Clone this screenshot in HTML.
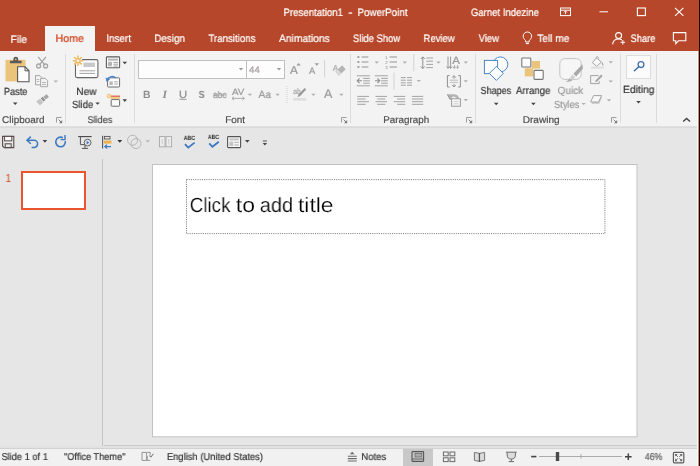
<!DOCTYPE html>
<html><head><meta charset="utf-8"><title>Presentation1 - PowerPoint</title>
<style>
html,body{margin:0;padding:0;}
body{text-rendering:geometricPrecision;width:700px;height:466px;overflow:hidden;background:#e6e6e6;position:relative;font-family:"Liberation Sans",sans-serif;}
.r{position:absolute;display:block;}
.t{position:absolute;white-space:pre;display:block;transform-origin:0 0;will-change:transform;}
</style></head><body>
<div class="r" style="left:0px;top:0px;width:700px;height:51px;background:#B7472A;"></div>
<div class="r" style="left:0px;top:51px;width:700px;height:75px;background:#F3F3F3;"></div>
<div class="r" style="left:0px;top:126px;width:700px;height:1px;background:#e0e0e0;"></div>
<div class="r" style="left:0px;top:127px;width:700px;height:1px;background:#dadada;"></div>
<div class="r" style="left:0px;top:128px;width:700px;height:320px;background:#e6e6e6;"></div>
<div class="r" style="left:45px;top:26px;width:50px;height:25px;background:#F3F3F3;"></div>
<span class="t" style="left:283px;padding-left:0.46px;top:6px;font-size:10.8px;line-height:15px;transform:scaleX(0.8951);color:#fff;-webkit-text-stroke:0.22px #fff;">Presentation1</span>
<span class="t" style="left:348px;padding-left:0.19px;top:6px;font-size:10.8px;line-height:15px;transform:scaleX(1.2094);color:#fff;-webkit-text-stroke:0.22px #fff;">-</span>
<span class="t" style="left:357px;padding-left:0.44px;top:6px;font-size:10.8px;line-height:15px;transform:scaleX(0.9066);color:#fff;-webkit-text-stroke:0.22px #fff;">PowerPoint</span>
<span class="t" style="left:470px;padding-left:0.93px;top:6px;font-size:10.8px;line-height:15px;transform:scaleX(0.8861);color:#fff;-webkit-text-stroke:0.22px #fff;">Garnet Indezine</span>
<span class="t" style="left:10px;padding-left:0.59px;top:33px;font-size:10.8px;line-height:15px;transform:scaleX(0.9477);color:#fff;-webkit-text-stroke:0.22px #fff;">File</span>
<span class="t" style="left:106px;padding-left:0.21px;top:32px;font-size:10.8px;line-height:15px;transform:scaleX(0.9174);color:#fff;-webkit-text-stroke:0.22px #fff;">Insert</span>
<span class="t" style="left:154px;padding-left:0.32px;top:32px;font-size:10.8px;line-height:15px;transform:scaleX(0.9113);color:#fff;-webkit-text-stroke:0.22px #fff;">Design</span>
<span class="t" style="left:208px;padding-left:0.43px;top:32px;font-size:10.8px;line-height:15px;transform:scaleX(0.8977);color:#fff;-webkit-text-stroke:0.22px #fff;">Transitions</span>
<span class="t" style="left:279px;padding-left:0.08px;top:32px;font-size:10.8px;line-height:15px;transform:scaleX(0.9487);color:#fff;-webkit-text-stroke:0.22px #fff;">Animations</span>
<span class="t" style="left:352px;padding-left:1.11px;top:32px;font-size:10.8px;line-height:15px;transform:scaleX(0.8753);color:#fff;-webkit-text-stroke:0.22px #fff;">Slide Show</span>
<span class="t" style="left:423px;padding-left:0.60px;top:32px;font-size:10.8px;line-height:15px;transform:scaleX(0.8767);color:#fff;-webkit-text-stroke:0.22px #fff;">Review</span>
<span class="t" style="left:478px;padding-left:0.64px;top:32px;font-size:10.8px;line-height:15px;transform:scaleX(0.8837);color:#fff;-webkit-text-stroke:0.22px #fff;">View</span>
<span class="t" style="left:537px;padding-left:0.18px;top:32px;font-size:10.8px;line-height:15px;transform:scaleX(0.9465);color:#fff;-webkit-text-stroke:0.22px #fff;">Tell me</span>
<span class="t" style="left:630px;padding-left:0.55px;top:32px;font-size:10.8px;line-height:15px;transform:scaleX(0.8688);color:#fff;-webkit-text-stroke:0.22px #fff;">Share</span>
<span class="t" style="left:55px;padding-left:0.43px;top:32px;font-size:10.8px;line-height:15px;transform:scaleX(0.9875);color:#D0431A;-webkit-text-stroke:0.22px #D0431A;">Home</span>
<div class="r" style="left:65px;top:54px;width:1px;height:69px;background:#dcdcdc;"></div>
<div class="r" style="left:134px;top:54px;width:1px;height:69px;background:#dcdcdc;"></div>
<div class="r" style="left:350px;top:54px;width:1px;height:69px;background:#dcdcdc;"></div>
<div class="r" style="left:475px;top:54px;width:1px;height:69px;background:#dcdcdc;"></div>
<div class="r" style="left:620px;top:54px;width:1px;height:69px;background:#dcdcdc;"></div>
<div class="r" style="left:656px;top:54px;width:1px;height:69px;background:#dcdcdc;"></div>
<span class="t" style="left:2px;padding-left:0.10px;top:114px;font-size:9.8px;line-height:13px;transform:scaleX(1.0140);color:#505050;-webkit-text-stroke:0.2px #505050;">Clipboard</span>
<span class="t" style="left:87px;padding-left:0.42px;top:114px;font-size:9.8px;line-height:13px;transform:scaleX(0.9343);color:#505050;-webkit-text-stroke:0.2px #505050;">Slides</span>
<span class="t" style="left:225px;padding-left:0.18px;top:114px;font-size:9.8px;line-height:13px;transform:scaleX(1.0140);color:#505050;-webkit-text-stroke:0.2px #505050;">Font</span>
<span class="t" style="left:383px;padding-left:0.19px;top:114px;font-size:9.8px;line-height:13px;transform:scaleX(1.0037);color:#505050;-webkit-text-stroke:0.2px #505050;">Paragraph</span>
<span class="t" style="left:522px;padding-left:0.65px;top:114px;font-size:9.8px;line-height:13px;transform:scaleX(1.0285);color:#505050;-webkit-text-stroke:0.2px #505050;">Drawing</span>
<span class="t" style="left:3px;padding-left:1.07px;top:86px;font-size:10.4px;line-height:14px;transform:scaleX(0.8820);color:#3a3a3a;-webkit-text-stroke:0.22px #3a3a3a;">Paste</span>
<span class="t" style="left:76px;padding-left:0.17px;top:86px;font-size:10.4px;line-height:14px;transform:scaleX(0.9761);color:#3a3a3a;-webkit-text-stroke:0.22px #3a3a3a;">New</span>
<span class="t" style="left:72px;padding-left:0.08px;top:99px;font-size:10.4px;line-height:14px;transform:scaleX(0.9142);color:#3a3a3a;-webkit-text-stroke:0.22px #3a3a3a;">Slide</span>
<span class="t" style="left:480px;padding-left:0.56px;top:85px;font-size:10.4px;line-height:14px;transform:scaleX(0.8741);color:#3a3a3a;-webkit-text-stroke:0.22px #3a3a3a;">Shapes</span>
<span class="t" style="left:515px;padding-left:1.05px;top:85px;font-size:10.4px;line-height:14px;transform:scaleX(0.9309);color:#3a3a3a;-webkit-text-stroke:0.22px #3a3a3a;">Arrange</span>
<span class="t" style="left:557px;padding-left:0.55px;top:85px;font-size:10.4px;line-height:14px;transform:scaleX(0.9650);color:#9b9b9b;-webkit-text-stroke:0.22px #9b9b9b;">Quick</span>
<span class="t" style="left:554px;padding-left:0.09px;top:99px;font-size:10.4px;line-height:14px;transform:scaleX(0.8917);color:#9b9b9b;-webkit-text-stroke:0.22px #9b9b9b;">Styles</span>
<span class="t" style="left:623px;padding-left:0.06px;top:84px;font-size:10.4px;line-height:14px;transform:scaleX(0.9876);color:#3a3a3a;-webkit-text-stroke:0.22px #3a3a3a;">Editing</span>
<div class="r" style="left:138px;top:60px;width:109px;height:19px;background:#fdfdfd;box-sizing:border-box;border:1px solid #c0c0c0;"></div>
<div class="r" style="left:246px;top:60px;width:39px;height:19px;background:#fdfdfd;box-sizing:border-box;border:1px solid #c0c0c0;"></div>
<span class="t" style="left:249px;padding-left:0.09px;top:64px;font-size:9.6px;line-height:13px;transform:scaleX(1.0014);color:#a9a3a3;-webkit-text-stroke:0.22px #a9a3a3;">44</span>
<div class="r" style="left:626px;top:55px;width:25px;height:24px;background:#fbfbfb;box-sizing:border-box;border:1px solid #dcdcdc;"></div>
<span class="t" style="left:143px;padding-left:0.02px;top:89px;font-size:10.4px;line-height:14px;transform:scaleX(0.9914);color:#8e8e8e;font-weight:bold;">B</span>
<span class="t" style="left:162px;padding-left:0.56px;top:88px;font-size:11.0px;line-height:15px;transform:scaleX(1.0620);color:#8e8e8e;font-weight:bold;font-style:italic;font-family:'Liberation Serif',serif;">I</span>
<span class="t" style="left:178px;padding-left:0.86px;top:89px;font-size:10.4px;line-height:14px;transform:scaleX(1.0815);color:#8e8e8e;-webkit-text-stroke:0.22px #8e8e8e;">U</span>
<span class="t" style="left:199px;padding-left:0.40px;top:89px;font-size:10.4px;line-height:14px;transform:scaleX(0.8654);color:#cfcfcf;font-weight:bold;">S</span>
<span class="t" style="left:198px;padding-left:0.40px;top:89px;font-size:10.4px;line-height:14px;transform:scaleX(0.8654);color:#8e8e8e;font-weight:bold;">S</span>
<span class="t" style="left:212px;padding-left:0.93px;top:89px;font-size:9.6px;line-height:13px;transform:scaleX(0.8973);color:#9a9a9a;-webkit-text-stroke:0.22px #9a9a9a;">abc</span>
<span class="t" style="left:231px;padding-left:0.93px;top:86px;font-size:9.2px;line-height:12px;transform:scaleX(1.0575);color:#9a9a9a;-webkit-text-stroke:0.22px #9a9a9a;">AV</span>
<span class="t" style="left:258px;padding-left:0.61px;top:88px;font-size:10.6px;line-height:14px;transform:scaleX(0.9573);color:#9a9a9a;-webkit-text-stroke:0.22px #9a9a9a;">Aa</span>
<span class="t" style="left:323px;padding-left:1.01px;top:86px;font-size:12.5px;line-height:17px;transform:scaleX(0.9653);color:#9a9a9a;-webkit-text-stroke:0.22px #9a9a9a;">A</span>
<span class="t" style="left:289px;padding-left:0.95px;top:64px;font-size:11.4px;line-height:15px;transform:scaleX(1.0320);color:#9a9a9a;-webkit-text-stroke:0.22px #9a9a9a;">A</span>
<span class="t" style="left:308px;padding-left:0.99px;top:64px;font-size:9.4px;line-height:13px;transform:scaleX(0.9948);color:#9a9a9a;-webkit-text-stroke:0.22px #9a9a9a;">A</span>
<span class="t" style="left:292px;padding-left:0.97px;top:86px;font-size:7.8px;line-height:11px;transform:scaleX(0.9220);color:#9a9a9a;-webkit-text-stroke:0.1px #9a9a9a;">ab</span>
<span class="t" style="left:332px;padding-left:0.74px;top:62px;font-size:8.6px;line-height:12px;transform:scaleX(0.9295);color:#a8a8a8;-webkit-text-stroke:0.22px #a8a8a8;">A</span>
<span class="t" style="left:385px;padding-left:0.04px;top:55px;font-size:4.2px;line-height:6px;transform:scaleX(1.1023);color:#8a8a8a;">1</span>
<span class="t" style="left:385px;padding-left:0.17px;top:60px;font-size:4.2px;line-height:6px;transform:scaleX(1.0443);color:#8a8a8a;">2</span>
<span class="t" style="left:385px;padding-left:0.24px;top:65px;font-size:4.2px;line-height:6px;transform:scaleX(1.0025);color:#8a8a8a;">3</span>
<span class="t" style="left:452px;padding-left:0.35px;top:54px;font-size:10.6px;line-height:14px;transform:scaleX(1.0814);color:#9a9a9a;-webkit-text-stroke:0.22px #9a9a9a;">A</span>
<span class="t" style="left:183px;padding-left:0.79px;top:134px;font-size:6.2px;line-height:9px;transform:scaleX(0.8541);color:#333;font-weight:bold;">ABC</span>
<span class="t" style="left:207px;padding-left:1.04px;top:133px;font-size:6.2px;line-height:9px;transform:scaleX(0.8389);color:#333;font-weight:bold;">ABC</span>
<div class="r" style="left:102px;top:159px;width:1px;height:287px;background:#c3c3c3;"></div>
<div class="r" style="left:104px;top:445px;width:594px;height:1px;background:#cbcbcb;"></div>
<div class="r" style="left:0px;top:446px;width:698px;height:2px;background:#e2e2e2;"></div>
<div class="r" style="left:0px;top:448px;width:698px;height:1px;background:#d2d2d2;"></div>
<svg class="r" style="left:150px;top:162px;" width="490" height="278" viewBox="150 162 490 278"><rect x="152.5" y="164.5" width="484.5" height="272.3" fill="#fff" stroke="#c2c2c2" stroke-width="1"/><rect x="186.5" y="179.6" width="418.4" height="54" fill="none" stroke="#808080" stroke-width="1" stroke-dasharray="1.1 1.1"/></svg>
<span class="t" style="left:189px;padding-left:0.83px;top:192px;font-size:20.6px;line-height:27px;transform:scaleX(0.9118);color:#000;-webkit-text-stroke:0.2px #fff;">Click</span>
<span class="t" style="left:235px;padding-left:0.77px;top:192px;font-size:20.6px;line-height:27px;transform:scaleX(1.1169);color:#000;-webkit-text-stroke:0.2px #fff;">to</span>
<span class="t" style="left:259px;padding-left:0.78px;top:192px;font-size:20.6px;line-height:27px;transform:scaleX(0.9696);color:#000;-webkit-text-stroke:0.2px #fff;">add</span>
<span class="t" style="left:297px;padding-left:0.86px;top:192px;font-size:20.6px;line-height:27px;transform:scaleX(1.1123);color:#000;-webkit-text-stroke:0.2px #fff;">title</span>
<div class="r" style="left:21px;top:171px;width:65px;height:39px;background:#fff;box-sizing:border-box;border:2px solid #EA5530;"></div>
<span class="t" style="left:5px;padding-left:0.48px;top:172px;font-size:11.5px;line-height:15px;transform:scaleX(0.8857);color:#D04A22;">1</span>
<div class="r" style="left:0px;top:449px;width:700px;height:17px;background:#f1f1f1;"></div>
<div class="r" style="left:403px;top:449px;width:30px;height:17px;background:#c8c8c8;"></div>
<span class="t" style="left:1px;padding-left:0.41px;top:451px;font-size:10.0px;line-height:14px;transform:scaleX(0.9287);color:#3a3a3a;-webkit-text-stroke:0.22px #3a3a3a;">Slide 1 of 1</span>
<span class="t" style="left:64px;padding-left:0.02px;top:451px;font-size:10.0px;line-height:14px;transform:scaleX(0.9193);color:#3a3a3a;-webkit-text-stroke:0.22px #3a3a3a;">&quot;Office Theme&quot;</span>
<span class="t" style="left:166px;padding-left:0.88px;top:451px;font-size:10.0px;line-height:14px;transform:scaleX(0.9402);color:#3a3a3a;-webkit-text-stroke:0.22px #3a3a3a;">English (United States)</span>
<span class="t" style="left:361px;padding-left:0.22px;top:451px;font-size:10.0px;line-height:14px;transform:scaleX(0.9623);color:#3a3a3a;-webkit-text-stroke:0.22px #3a3a3a;">Notes</span>
<span class="t" style="left:644px;padding-left:0.92px;top:451px;font-size:10.0px;line-height:14px;transform:scaleX(0.8745);color:#666;-webkit-text-stroke:0.22px #666;">46%</span>
<div class="r" style="left:698px;top:0px;width:1px;height:51px;background:#C04A2A;"></div>
<div class="r" style="left:697px;top:51px;width:1px;height:415px;background:#fafafa;"></div>
<div class="r" style="left:698px;top:51px;width:1px;height:415px;background:#D9866C;"></div>
<div class="r" style="left:699px;top:0px;width:1px;height:466px;background:#140a06;"></div>
<svg class="r" style="left:0;top:0;pointer-events:none" width="700" height="466" viewBox="0 0 700 466"><rect x="5.5" y="59.8" width="20" height="21.6" fill="#EBC47B"/><path d="M10 63.3v-2.6h3.4v-1.6a2.4 2.4 0 0 1 4.8 0v1.6h3.4v2.6z" fill="#5a5a5a"/><circle cx="15.8" cy="59.3" r="0.9" fill="#EBC47B"/><path d="M17.6 66.8h7.4l4 4v10.9h-11.4z" fill="#fff" stroke="#555" stroke-width="1.1"/><path d="M25 66.8v4h4" fill="none" stroke="#555" stroke-width="1"/><path d="M12.90 102.50h4.6l-2.30 2.6z" fill="#444"/><g stroke="#a6a6a6" stroke-width="1.3" fill="none"><path d="M38.2 56.8L45 65.2M46 56.8L39.2 65.2"/><circle cx="38.6" cy="66" r="2"/><circle cx="45.6" cy="66" r="2"/></g><g stroke="#a6a6a6" stroke-width="1" fill="#f3f3f3"><path d="M35.5 75.6h4.4l2 2v7.2h-6.4z"/><path d="M40.6 78.3h4.6l2.4 2.4v6h-7z"/><path d="M42 82.5h4M42 84.5h4" stroke-width="0.8"/><path d="M36.8 79.5h2.4M36.8 81.5h2.4" stroke-width="0.8"/></g><path d="M53.50 80.40h4.6l-2.30 2.4z" fill="#b4b4b4"/><g fill="#a6a6a6"><path d="M43.5 96.6l3.2-2.4 2.2 2.8-3.2 2.4z"/><path d="M40.8 98.2l2-1.4 2.6 3.4-2 1.4z" fill="#8f8f8f"/><path d="M36.2 101.6l4-3 3 3.8-3.2 3z" fill="#c4c4c4"/></g><path d="M61.5 117.5H56.5V122.5" stroke="#9c9c9c" fill="none"/><path d="M58.6 119.6L61.6 122.6" stroke="#7c7c7c" fill="none"/><path d="M62.2 120V123.2H59z" fill="#7c7c7c"/><rect x="75.5" y="59.6" width="22.4" height="18" rx="1.6" fill="#fdfdfd" stroke="#666" stroke-width="1.1"/><rect x="83.4" y="62.6" width="11.6" height="4.4" fill="#c9c9c9"/><path d="M79.5 70.8H95" stroke="#9a9a9a" stroke-width="0.9" fill="none"/><path d="M79.5 73.4H95" stroke="#9a9a9a" stroke-width="0.9" fill="none"/><circle cx="78" cy="60.8" r="4.4" fill="#F3F3F3"/><g stroke="#EDB24A" stroke-width="1.3" fill="none"><path d="M78 55.6v10.4M72.8 60.8h10.4M74.3 57.1l7.4 7.4M81.7 57.1l-7.4 7.4"/></g><circle cx="78" cy="60.8" r="2" fill="#F3F3F3" stroke="#EDB24A" stroke-width="1"/><path d="M95.30 102.40h4.6l-2.30 2.4z" fill="#444"/><rect x="106.4" y="56.9" width="13.2" height="10.8" rx="0.8" fill="#fdfdfd" stroke="#5a5a5a" stroke-width="1.1"/><rect x="108" y="58.6" width="10" height="2" fill="#b5b5b5"/><rect x="108" y="61.8" width="4" height="4.4" fill="#b5b5b5"/><path d="M113.4 62.4H118" stroke="#8a8a8a" stroke-width="0.8" fill="none"/><path d="M113.4 64.2H118" stroke="#8a8a8a" stroke-width="0.8" fill="none"/><path d="M113.4 66H118" stroke="#8a8a8a" stroke-width="0.8" fill="none"/><path d="M122.50 61.70h4.6l-2.30 2.6z" fill="#444"/><rect x="107.6" y="77.8" width="12" height="9.2" rx="0.8" fill="#fdfdfd" stroke="#6a6a6a" stroke-width="1"/><rect x="109.4" y="81.4" width="3.4" height="3.6" fill="#b9b9b9"/><path d="M114 81.8H118" stroke="#9a9a9a" stroke-width="0.8" fill="none"/><path d="M114 84H118" stroke="#9a9a9a" stroke-width="0.8" fill="none"/><path d="M107.4 80.6c0.6-3.6 5.2-5.4 8.4-2.6" stroke="#4A86C5" stroke-width="1.5" fill="none"/><path d="M105.6 77.4l0.8 4.4 3.8-2.2z" fill="#4A86C5"/><rect x="111.2" y="99.6" width="8.4" height="6.6" rx="0.6" fill="#fdfdfd" stroke="#6a6a6a" stroke-width="1"/><path d="M110.8 96.2H120" stroke="#E0533A" stroke-width="1.2" fill="none"/><path d="M110.8 98H120" stroke="#EDB24A" stroke-width="1.2" fill="none"/><g stroke="#EDB24A" stroke-width="0.9"><path d="M109 93.6v5M106.5 96.1h5M107.2 94.3l3.6 3.6M110.8 94.3l-3.6 3.6"/></g><circle cx="109" cy="96.1" r="1.2" fill="#f7dba6"/><path d="M122.50 99.30h4.6l-2.30 2.6z" fill="#444"/><path d="M238.80 68.00h4.4l-2.20 2.4z" fill="#9a9a9a"/><path d="M276.80 68.00h4.4l-2.20 2.4z" fill="#9a9a9a"/><path d="M296.4 65.6l2.2-2.6 2.2 2.6z" fill="#9a9a9a"/><path d="M314.6 63.2h4.4l-2.2 2.6z" fill="#9a9a9a"/><path d="M324.6 60V77.5" stroke="#d2d2d2" stroke-width="1" fill="none"/><g transform="translate(0.2 2) rotate(-42 340 68.6)"><rect x="335.6" y="66" width="9.4" height="5.4" rx="0.6" fill="#b4b4b4"/><rect x="335.6" y="66" width="3.4" height="5.4" rx="0.6" fill="#d8d8d8"/></g><path d="M179.6 99.3H186.6" stroke="#8e8e8e" stroke-width="0.9" fill="none"/><path d="M213 95H227" stroke="#9a9a9a" stroke-width="0.8" fill="none"/><path d="M232 98.4h12.4M234 96.6l-2 1.8 2 1.8M242.4 96.6l2 1.8-2 1.8" stroke="#9a9a9a" stroke-width="0.8" fill="none"/><path d="M247.70 93.70h4.4l-2.20 2.2z" fill="#b0b0b0"/><path d="M275.40 93.70h4.4l-2.20 2.2z" fill="#b0b0b0"/><path d="M287 86V103" stroke="#cfcfcf" stroke-width="1" stroke-dasharray="1 1"/><path d="M306.2 89.4l-6 6.6-2.6 1.2 0.8-2.8 6.2-6.4z" fill="#9a9a9a"/><rect x="293.2" y="98" width="13" height="2.6" fill="#dedede"/><path d="M311.20 93.70h4.4l-2.20 2.2z" fill="#b0b0b0"/><path d="M339.20 93.70h4.4l-2.20 2.2z" fill="#b0b0b0"/><path d="M346.5 117.5H341.5V122.5" stroke="#9c9c9c" fill="none"/><path d="M343.6 119.6L346.6 122.6" stroke="#7c7c7c" fill="none"/><path d="M347.2 120V123.2H344z" fill="#7c7c7c"/><rect x="357.4" y="56" width="2" height="2" fill="#a3a3a3"/><path d="M361.6 57H368.4" stroke="#a3a3a3" stroke-width="1.2" fill="none"/><path d="M389.6 57H397" stroke="#a3a3a3" stroke-width="1.2" fill="none"/><rect x="357.4" y="61" width="2" height="2" fill="#a3a3a3"/><path d="M361.6 62H368.4" stroke="#a3a3a3" stroke-width="1.2" fill="none"/><path d="M389.6 62H397" stroke="#a3a3a3" stroke-width="1.2" fill="none"/><rect x="357.4" y="66" width="2" height="2" fill="#a3a3a3"/><path d="M361.6 67H368.4" stroke="#a3a3a3" stroke-width="1.2" fill="none"/><path d="M389.6 67H397" stroke="#a3a3a3" stroke-width="1.2" fill="none"/><path d="M374.60 61.50h4.4l-2.20 2.2z" fill="#b0b0b0"/><path d="M402.60 61.50h4.4l-2.20 2.2z" fill="#b0b0b0"/><path d="M413.8 54V71.3" stroke="#d2d2d2" stroke-width="1" fill="none"/><path d="M356.8 75.8H369.8" stroke="#a3a3a3" stroke-width="1" fill="none"/><path d="M356.8 85.8H369.8" stroke="#a3a3a3" stroke-width="1" fill="none"/><path d="M363.2 78.4H369.8" stroke="#a3a3a3" stroke-width="1" fill="none"/><path d="M363.2 80.8H369.8" stroke="#a3a3a3" stroke-width="1" fill="none"/><path d="M363.2 83.2H369.8" stroke="#a3a3a3" stroke-width="1" fill="none"/><path d="M374.8 75.8H387.8" stroke="#a3a3a3" stroke-width="1" fill="none"/><path d="M374.8 85.8H387.8" stroke="#a3a3a3" stroke-width="1" fill="none"/><path d="M381.2 78.4H387.8" stroke="#a3a3a3" stroke-width="1" fill="none"/><path d="M381.2 80.8H387.8" stroke="#a3a3a3" stroke-width="1" fill="none"/><path d="M381.2 83.2H387.8" stroke="#a3a3a3" stroke-width="1" fill="none"/><path d="M362 80.8h-4.6M359.6 78.4l-2.4 2.4 2.4 2.4" stroke="#8f8f8f" stroke-width="1.1" fill="none"/><path d="M375 80.8h4.6M377.4 78.4l2.4 2.4-2.4 2.4" stroke="#8f8f8f" stroke-width="1.1" fill="none"/><path d="M394 72.5V90" stroke="#d2d2d2" stroke-width="1" fill="none"/><path d="M400.8 77.6H405.8" stroke="#a3a3a3" stroke-width="1" fill="none"/><path d="M407 77.6H412" stroke="#a3a3a3" stroke-width="1" fill="none"/><path d="M400.8 80.2H405.8" stroke="#a3a3a3" stroke-width="1" fill="none"/><path d="M407 80.2H412" stroke="#a3a3a3" stroke-width="1" fill="none"/><path d="M400.8 82.8H405.8" stroke="#a3a3a3" stroke-width="1" fill="none"/><path d="M407 82.8H412" stroke="#a3a3a3" stroke-width="1" fill="none"/><path d="M400.8 85.2H405.8" stroke="#a3a3a3" stroke-width="1" fill="none"/><path d="M407 85.2H412" stroke="#a3a3a3" stroke-width="1" fill="none"/><path d="M416.60 79.90h4.4l-2.20 2.2z" fill="#b0b0b0"/><path d="M357.2 96.4H369" stroke="#a3a3a3" stroke-width="1" fill="none"/><path d="M375.5 96.4H387" stroke="#a3a3a3" stroke-width="1" fill="none"/><path d="M393.7 96.4H405.2" stroke="#a3a3a3" stroke-width="1" fill="none"/><path d="M411.9 96.4H423.2" stroke="#a3a3a3" stroke-width="1" fill="none"/><path d="M357.2 99.0H365.6" stroke="#a3a3a3" stroke-width="1" fill="none"/><path d="M377.2 99.0H385.3" stroke="#a3a3a3" stroke-width="1" fill="none"/><path d="M397.1 99.0H405.2" stroke="#a3a3a3" stroke-width="1" fill="none"/><path d="M411.9 99.0H423.2" stroke="#a3a3a3" stroke-width="1" fill="none"/><path d="M357.2 101.7H369" stroke="#a3a3a3" stroke-width="1" fill="none"/><path d="M375.5 101.7H387" stroke="#a3a3a3" stroke-width="1" fill="none"/><path d="M393.7 101.7H405.2" stroke="#a3a3a3" stroke-width="1" fill="none"/><path d="M411.9 101.7H423.2" stroke="#a3a3a3" stroke-width="1" fill="none"/><path d="M357.2 104.3H365.6" stroke="#a3a3a3" stroke-width="1" fill="none"/><path d="M377.2 104.3H385.3" stroke="#a3a3a3" stroke-width="1" fill="none"/><path d="M397.1 104.3H405.2" stroke="#a3a3a3" stroke-width="1" fill="none"/><path d="M411.9 104.3H423.2" stroke="#a3a3a3" stroke-width="1" fill="none"/><path d="M422.8 57v11.4M420.8 59l2-2.2 2 2.2M420.8 66.4l2 2.2 2-2.2" stroke="#8f8f8f" stroke-width="1" fill="none"/><path d="M426.2 58H433" stroke="#a3a3a3" stroke-width="1" fill="none"/><path d="M426.2 61.2H433" stroke="#a3a3a3" stroke-width="1" fill="none"/><path d="M426.2 64.4H433" stroke="#a3a3a3" stroke-width="1" fill="none"/><path d="M426.2 67.6H433" stroke="#a3a3a3" stroke-width="1" fill="none"/><path d="M436.20 61.50h4.4l-2.20 2.2z" fill="#b0b0b0"/><path d="M448 56.6v11.6M450.6 56.6v11.6M446.6 66.6l1.4 1.8 1.4-1.8M449.2 66.6l1.4 1.8 1.4-1.8" stroke="#8f8f8f" stroke-width="0.9" fill="none"/><path d="M454.4 65v3.4M457.6 65v3.4M453.2 66.8l1.2 1.6 1.2-1.6M456.4 66.8l1.2 1.6 1.2-1.6" stroke="#9a9a9a" stroke-width="0.8" fill="none"/><path d="M463.60 61.50h4.4l-2.20 2.2z" fill="#b0b0b0"/><path d="M449.6 75.6h-2.2v11.4h2.2M458.2 75.6h2.2v11.4h-2.2" stroke="#8f8f8f" stroke-width="1" fill="none"/><path d="M449.8 80.2H458" stroke="#b9b9b9" stroke-width="0.9" fill="none"/><path d="M449.8 82.4H458" stroke="#b9b9b9" stroke-width="0.9" fill="none"/><path d="M452.2 77.6l1.8-2 1.8 2M452.2 85l1.8 2 1.8-2M454 75.8v3M454 84v3" stroke="#8f8f8f" stroke-width="0.9" fill="none"/><path d="M463.60 80.30h4.4l-2.20 2.2z" fill="#b0b0b0"/><path d="M447.2 94.2h6.6c3 0 4.8 1.6 5.4 4.2l-3 0-0-0c-0.6-1.2-1.6-1.8-3.2-1.8l-2.6 3.4-3.2-5.8z" fill="#b4b4b4"/><path d="M447.4 94.4l3 5.4" stroke="#8f8f8f" stroke-width="1"/><rect x="451.6" y="98.8" width="8.8" height="7.4" fill="#f8f8f8" stroke="#9a9a9a" stroke-width="1"/><path d="M453.4 101.6H458.6" stroke="#c4c4c4" stroke-width="0.8" fill="none"/><path d="M453.4 103.8H458.6" stroke="#c4c4c4" stroke-width="0.8" fill="none"/><path d="M463.60 99.10h4.4l-2.20 2.2z" fill="#b0b0b0"/><path d="M471.5 117.5H466.5V122.5" stroke="#9c9c9c" fill="none"/><path d="M468.6 119.6L471.6 122.6" stroke="#7c7c7c" fill="none"/><path d="M472.2 120V123.2H469z" fill="#7c7c7c"/><circle cx="500.4" cy="64.3" r="7.4" fill="#fdfdfd" stroke="#4A86C5" stroke-width="1"/><rect x="484.4" y="60.4" width="13.2" height="13.2" fill="#fdfdfd" stroke="#4A86C5" stroke-width="1"/><path d="M496.4 66.4l7 7-7 7-7-7z" fill="#fdfdfd" stroke="#4A86C5" stroke-width="1"/><path d="M493.90 102.80h4.6l-2.30 2.4z" fill="#444"/><rect x="531.8" y="61" width="8.2" height="7.6" fill="#EBC47B"/><rect x="524.8" y="68.2" width="8.2" height="8.2" fill="#EBC47B"/><rect x="521.8" y="58" width="9" height="9" rx="0.8" fill="#fdfdfd" stroke="#767676" stroke-width="1.1"/><rect x="534" y="70.4" width="9.2" height="9" rx="0.8" fill="#fdfdfd" stroke="#767676" stroke-width="1.1"/><path d="M531.10 102.80h4.6l-2.30 2.4z" fill="#444"/><rect x="559.8" y="58.6" width="21.4" height="20.8" rx="5" fill="#f6f6f6" stroke="#c4c4c4" stroke-width="1"/><path d="M565.4 81.4c2.4-0.4 3.2-1.6 4-3.4l3 2.6c-1.6 1.2-3.6 1.4-7 0.8z" fill="#b0b0b0"/><path d="M570 77.2l2.6-2.6 2.6 2.6-2.4 2.8z" fill="#d0d0d0"/><path d="M573.4 73.8l9-9.6 0.4 4.6-6.6 7.6z" fill="#a8a8a8"/><path d="M581.40 102.90h4.4l-2.20 2.2z" fill="#b0b0b0"/><path d="M596.4 57.8l5 4.2-4.6 4.4-4.4-3.8z" fill="#f8f8f8" stroke="#a3a3a3" stroke-width="1"/><path d="M596 58.4c0-2.4 2.4-2.4 2.4 0" stroke="#a3a3a3" fill="none" stroke-width="0.9"/><path d="M601.8 62.2c1.4 0.6 1.8 2 1.6 3.6-1.2-0.6-1.8-1.8-1.6-3.6z" fill="#a3a3a3"/><rect x="591" y="66.6" width="13" height="2" fill="#dedede"/><path d="M608.60 61.30h4.4l-2.20 2.2z" fill="#b0b0b0"/><path d="M598.6 75.6h-8v8h8.6v-2.4" fill="none" stroke="#a3a3a3" stroke-width="1"/><path d="M602.6 76l-5.4 5.6-2 0.6 0.6-2 5.4-5.6z" fill="#a3a3a3"/><path d="M608.60 80.50h4.4l-2.20 2.2z" fill="#b0b0b0"/><path d="M594.6 97.6h7.6l-3 6.4h-7.6z" fill="#cfcfcf"/><path d="M593.6 95.6h8l-3 6.4h-8z" fill="#f8f8f8" stroke="#a3a3a3" stroke-width="1"/><path d="M606.80 99.30h4.4l-2.20 2.2z" fill="#b0b0b0"/><path d="M616.5 117.5H611.5V122.5" stroke="#9c9c9c" fill="none"/><path d="M613.6 119.6L616.6 122.6" stroke="#7c7c7c" fill="none"/><path d="M617.2 120V123.2H614z" fill="#7c7c7c"/><circle cx="641" cy="64.6" r="2.9" fill="#fff" stroke="#3E6FA8" stroke-width="1.3"/><path d="M638.8 66.8l-4.4 4" stroke="#3E6FA8" stroke-width="1.5" stroke-linecap="round"/><path d="M636.20 101.00h4.6l-2.30 2.4z" fill="#444"/><path d="M683.2 121.6l3.4-3.2 3.4 3.2" stroke="#444" stroke-width="1.4" fill="none"/><rect x="560.5" y="8" width="10" height="7.6" fill="none" stroke="#fff" stroke-width="1"/><path d="M560.5 10.2h10" stroke="#fff"/><path d="M565.5 14.2v-3M564 12.4l1.5-1.6 1.5 1.6" stroke="#fff" stroke-width="0.9" fill="none"/><path d="M599.5 11.8H608" stroke="#fff" stroke-width="1" fill="none"/><rect x="637.4" y="8" width="8" height="7.6" fill="none" stroke="#fff" stroke-width="1.1"/><path d="M675 7.8l8.4 8M683.4 7.8l-8.4 8" stroke="#fff" stroke-width="1.1"/><path d="M525.6 40.6c-1.4-1.4-2.4-2.6-2.4-4.4a4.2 4.2 0 0 1 8.4 0c0 1.8-1 3-2.4 4.4v1.4h-3.6z" fill="none" stroke="#fff" stroke-width="1"/><path d="M525.8 43.6h3.2" stroke="#fff" stroke-width="1"/><circle cx="618.6" cy="35.6" r="3" fill="none" stroke="#fff" stroke-width="1.1"/><path d="M612.6 44.4c0.4-3.6 2.8-5.4 6-5.4 1.2 0 2.4 0.4 3.2 1" fill="none" stroke="#fff" stroke-width="1.1"/><path d="M622.8 40v4.6M620.5 42.3h4.6" stroke="#fff" stroke-width="1"/><path d="M673.4 32.6h12.4v8.2h-7.4l-2.6 2.8v-2.8h-2.4z" fill="none" stroke="#fff" stroke-width="1.1"/><path d="M2.6 136.4h11.2v11.2h-9.6l-1.6-1.6z" fill="none" stroke="#5a4a4a" stroke-width="1.1"/><rect x="4.6" y="136.4" width="7.2" height="4.4" fill="#fff" stroke="#5a4a4a" stroke-width="1"/><rect x="5.2" y="143.8" width="6" height="3.8" fill="none" stroke="#5a4a4a" stroke-width="1"/><path d="M27.4 140.2h6.6a3.6 3.6 0 0 1 0 7.2h-2.4" fill="none" stroke="#3C78C2" stroke-width="1.5"/><path d="M30.8 136.6l-3.8 3.6 3.8 3.6" fill="none" stroke="#3C78C2" stroke-width="1.5"/><path d="M42.60 140.10h4.6l-2.30 2.6z" fill="#444"/><path d="M65.3 141.2A4.8 4.8 0 1 1 62.8 137.7" fill="none" stroke="#3C78C2" stroke-width="1.6"/><path d="M65 135v4.6h-4.4" fill="none" stroke="#3C78C2" stroke-width="1.4"/><path d="M78.2 136.6h13.4" stroke="#444" stroke-width="1.1"/><path d="M80.4 137v7.6h5" fill="none" stroke="#555" stroke-width="1"/><path d="M82 148.4h6M85 144.8v3.4" stroke="#555" stroke-width="1"/><circle cx="87.6" cy="142.6" r="3.4" fill="#e6e6e6" stroke="#555" stroke-width="0.9"/><path d="M86.6 140.8l2.8 1.8-2.8 1.8z" fill="#3C78C2"/><path d="M102.6 135.8V148.6" stroke="#555" stroke-width="1.1" fill="none"/><rect x="104.4" y="136.4" width="5.6" height="2.6" fill="none" stroke="#555" stroke-width="0.9"/><rect x="104" y="140.6" width="7.4" height="3" fill="#EDB24A"/><path d="M111 146.6h-6M107 144.6l-2.2 2 2.2 2" stroke="#3C78C2" stroke-width="1.2" fill="none"/><path d="M117.40 140.10h4.8l-2.40 2.6z" fill="#333"/><circle cx="132.6" cy="140.2" r="5" fill="none" stroke="#b4b4b4" stroke-width="1"/><circle cx="136" cy="143.6" r="5" fill="none" stroke="#b4b4b4" stroke-width="1"/><path d="M145.60 140.20h4.4l-2.20 2.4z" fill="#b4b4b4"/><rect x="159.4" y="136.6" width="5.6" height="10.2" fill="#eee" stroke="#a6a6a6" stroke-width="0.9"/><rect x="166" y="136.6" width="5.6" height="10.2" fill="#eee" stroke="#a6a6a6" stroke-width="0.9"/><path d="M162.2 139v5.6M168.8 139v5.6" stroke="#c0c0c0" stroke-width="0.8"/><path d="M185 144.2l3.2 3.4 6.4-5" fill="none" stroke="#3C78C2" stroke-width="1.8"/><path d="M209.2 143.4l3.2 3.4 6.4-5" fill="none" stroke="#3C78C2" stroke-width="1.8"/><rect x="227.6" y="136.6" width="13" height="11" rx="0.8" fill="#f6f6f6" stroke="#555" stroke-width="1.1"/><rect x="229.4" y="138.4" width="9.4" height="2" fill="#c4c4c4"/><rect x="229.4" y="141.6" width="3.8" height="4.4" fill="#c4c4c4"/><path d="M234.4 142.4H238.8" stroke="#9a9a9a" stroke-width="0.8" fill="none"/><path d="M234.4 145H238.8" stroke="#9a9a9a" stroke-width="0.8" fill="none"/><path d="M245.00 140.10h4.6l-2.30 2.6z" fill="#444"/><path d="M262.8 141H267" stroke="#555" stroke-width="1" fill="none"/><path d="M262.70 143.00h4.4l-2.20 2.4z" fill="#444"/><path d="M142 452.4h4.6v8h-4.6zM147.2 452.4h3v3M147.2 456v4.4h3" fill="none" stroke="#8a8a8a" stroke-width="0.9"/><path d="M149.4 455.6l1.4 1.6 2.6-3.4" fill="none" stroke="#666" stroke-width="1"/><path d="M349.8 454.2l2.4-2.4 2.4 2.4z" fill="#6a6a6a"/><path d="M347.8 456.2h9M347.8 458.6h9M347.8 461h9" stroke="#6a6a6a" stroke-width="1.1"/><rect x="412" y="451.6" width="11.6" height="9.8" rx="0.6" fill="none" stroke="#555" stroke-width="1.1"/><rect x="415" y="453.4" width="6.8" height="3.6" fill="#aaa" stroke="#666" stroke-width="0.7"/><path d="M412 459h11.6" stroke="#555" stroke-width="0.9"/><rect x="443.4" y="452" width="4.8" height="3.8" fill="none" stroke="#6a6a6a" stroke-width="1"/><rect x="450" y="452" width="4.8" height="3.8" fill="none" stroke="#6a6a6a" stroke-width="1"/><rect x="443.4" y="457.8" width="4.8" height="3.8" fill="none" stroke="#6a6a6a" stroke-width="1"/><rect x="450" y="457.8" width="4.8" height="3.8" fill="none" stroke="#6a6a6a" stroke-width="1"/><path d="M474.4 452.4l5 1v8l-5-1zM484.6 452.4l-5 1v8l5-1z" fill="#dcdcdc" stroke="#6a6a6a" stroke-width="0.9"/><path d="M479.4 453v9" stroke="#555" stroke-width="1"/><path d="M505.8 452.2h11M507.2 452.6v2.4a4 4 0 0 0 8.2 0v-2.4" fill="#dcdcdc" stroke="#6a6a6a" stroke-width="1"/><path d="M511.3 459v2.4M508.6 461.6h5.4" stroke="#6a6a6a" stroke-width="1"/><path d="M531.2 456.6H536.4" stroke="#444" stroke-width="1.6" fill="none"/><path d="M539 456.5H622" stroke="#ababab" stroke-width="1" fill="none"/><rect x="555.8" y="452" width="3.4" height="9" fill="#4a4a4a"/><path d="M581 454V458.6" stroke="#ababab" stroke-width="1" fill="none"/><path d="M625 456.8h6.6M628.3 453.6v6.4" stroke="#444" stroke-width="1.5"/><rect x="673.4" y="452.4" width="10.4" height="10.4" rx="1" fill="none" stroke="#5e5e5e" stroke-width="1.2"/><path d="M675 454v2.6l2.6-2.6zM682.2 454v2.6l-2.6-2.6zM675 461.2v-2.6l2.6 2.6zM682.2 461.2v-2.6l-2.6 2.6z" fill="#6a6a6a"/><path d="M676 455l1.8 1.8M681.2 455l-1.8 1.8M676 460.2l1.8-1.8M681.2 460.2l-1.8-1.8" stroke="#6a6a6a" stroke-width="1"/></svg>
</body></html>
